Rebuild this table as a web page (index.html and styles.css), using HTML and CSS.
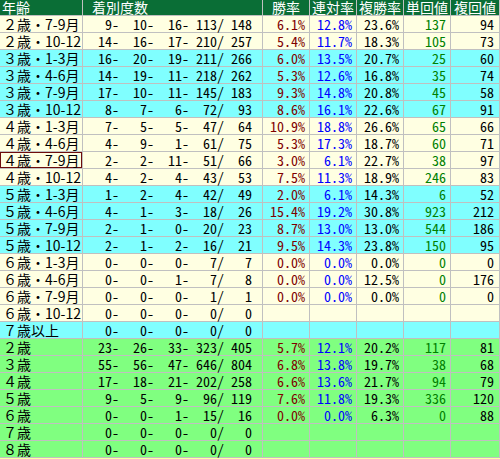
FILE: index.html
```html
<!DOCTYPE html>
<html lang="ja">
<head>
<meta charset="utf-8">
<link rel="stylesheet" href="styles.css">
</head>
<body>
<table class="stats">
<thead>
<tr><th class="h-age">年齢</th><th class="h-rec">着別度数</th><th class="h-n">勝率</th><th class="h-n">連対率</th><th class="h-n">複勝率</th><th class="h-n">単回値</th><th class="h-last">複回値</th></tr>
</thead>
<tbody>
<tr class="y"><td class="age">２歳・7-9月</td><td class="rec"><span>9-</span><span>10-</span><span>16-</span><span>113/</span><span>148</span></td><td class="win">6.1%</td><td class="ren">12.8%</td><td class="fuk">23.6%</td><td class="tan">137</td><td class="fkv">94</td></tr>
<tr class="y"><td class="age">２歳・10-12</td><td class="rec"><span>14-</span><span>16-</span><span>17-</span><span>210/</span><span>257</span></td><td class="win">5.4%</td><td class="ren">11.7%</td><td class="fuk">18.3%</td><td class="tan">105</td><td class="fkv">73</td></tr>
<tr class="c"><td class="age">３歳・1-3月</td><td class="rec"><span>16-</span><span>20-</span><span>19-</span><span>211/</span><span>266</span></td><td class="win">6.0%</td><td class="ren">13.5%</td><td class="fuk">20.7%</td><td class="tan">25</td><td class="fkv">60</td></tr>
<tr class="c"><td class="age">３歳・4-6月</td><td class="rec"><span>14-</span><span>19-</span><span>11-</span><span>218/</span><span>262</span></td><td class="win">5.3%</td><td class="ren">12.6%</td><td class="fuk">16.8%</td><td class="tan">35</td><td class="fkv">74</td></tr>
<tr class="c"><td class="age">３歳・7-9月</td><td class="rec"><span>17-</span><span>10-</span><span>11-</span><span>145/</span><span>183</span></td><td class="win">9.3%</td><td class="ren">14.8%</td><td class="fuk">20.8%</td><td class="tan">45</td><td class="fkv">58</td></tr>
<tr class="c"><td class="age">３歳・10-12</td><td class="rec"><span>8-</span><span>7-</span><span>6-</span><span>72/</span><span>93</span></td><td class="win">8.6%</td><td class="ren">16.1%</td><td class="fuk">22.6%</td><td class="tan">67</td><td class="fkv">91</td></tr>
<tr class="y"><td class="age">４歳・1-3月</td><td class="rec"><span>7-</span><span>5-</span><span>5-</span><span>47/</span><span>64</span></td><td class="win">10.9%</td><td class="ren">18.8%</td><td class="fuk">26.6%</td><td class="tan">65</td><td class="fkv">66</td></tr>
<tr class="y"><td class="age">４歳・4-6月</td><td class="rec"><span>4-</span><span>9-</span><span>1-</span><span>61/</span><span>75</span></td><td class="win">5.3%</td><td class="ren">17.3%</td><td class="fuk">18.7%</td><td class="tan">60</td><td class="fkv">71</td></tr>
<tr class="y"><td class="age sel">４歳・7-9月</td><td class="rec"><span>2-</span><span>2-</span><span>11-</span><span>51/</span><span>66</span></td><td class="win">3.0%</td><td class="ren">6.1%</td><td class="fuk">22.7%</td><td class="tan">38</td><td class="fkv">97</td></tr>
<tr class="y"><td class="age">４歳・10-12</td><td class="rec"><span>4-</span><span>2-</span><span>4-</span><span>43/</span><span>53</span></td><td class="win">7.5%</td><td class="ren">11.3%</td><td class="fuk">18.9%</td><td class="tan">246</td><td class="fkv">83</td></tr>
<tr class="c"><td class="age">５歳・1-3月</td><td class="rec"><span>1-</span><span>2-</span><span>4-</span><span>42/</span><span>49</span></td><td class="win">2.0%</td><td class="ren">6.1%</td><td class="fuk">14.3%</td><td class="tan">6</td><td class="fkv">52</td></tr>
<tr class="c"><td class="age">５歳・4-6月</td><td class="rec"><span>4-</span><span>1-</span><span>3-</span><span>18/</span><span>26</span></td><td class="win">15.4%</td><td class="ren">19.2%</td><td class="fuk">30.8%</td><td class="tan">923</td><td class="fkv">212</td></tr>
<tr class="c"><td class="age">５歳・7-9月</td><td class="rec"><span>2-</span><span>1-</span><span>0-</span><span>20/</span><span>23</span></td><td class="win">8.7%</td><td class="ren">13.0%</td><td class="fuk">13.0%</td><td class="tan">544</td><td class="fkv">186</td></tr>
<tr class="c"><td class="age">５歳・10-12</td><td class="rec"><span>2-</span><span>1-</span><span>2-</span><span>16/</span><span>21</span></td><td class="win">9.5%</td><td class="ren">14.3%</td><td class="fuk">23.8%</td><td class="tan">150</td><td class="fkv">95</td></tr>
<tr class="y"><td class="age">６歳・1-3月</td><td class="rec"><span>0-</span><span>0-</span><span>0-</span><span>7/</span><span>7</span></td><td class="win">0.0%</td><td class="ren">0.0%</td><td class="fuk">0.0%</td><td class="tan">0</td><td class="fkv">0</td></tr>
<tr class="y"><td class="age">６歳・4-6月</td><td class="rec"><span>0-</span><span>0-</span><span>1-</span><span>7/</span><span>8</span></td><td class="win">0.0%</td><td class="ren">0.0%</td><td class="fuk">12.5%</td><td class="tan">0</td><td class="fkv">176</td></tr>
<tr class="y"><td class="age">６歳・7-9月</td><td class="rec"><span>0-</span><span>0-</span><span>0-</span><span>1/</span><span>1</span></td><td class="win">0.0%</td><td class="ren">0.0%</td><td class="fuk">0.0%</td><td class="tan">0</td><td class="fkv">0</td></tr>
<tr class="y"><td class="age">６歳・10-12</td><td class="rec"><span>0-</span><span>0-</span><span>0-</span><span>0/</span><span>0</span></td><td class="win"></td><td class="ren"></td><td class="fuk"></td><td class="tan"></td><td class="fkv"></td></tr>
<tr class="c"><td class="age">７歳以上</td><td class="rec"><span>0-</span><span>0-</span><span>0-</span><span>0/</span><span>0</span></td><td class="win"></td><td class="ren"></td><td class="fuk"></td><td class="tan"></td><td class="fkv"></td></tr>
<tr class="g"><td class="age">２歳</td><td class="rec"><span>23-</span><span>26-</span><span>33-</span><span>323/</span><span>405</span></td><td class="win">5.7%</td><td class="ren">12.1%</td><td class="fuk">20.2%</td><td class="tan">117</td><td class="fkv">81</td></tr>
<tr class="g"><td class="age">３歳</td><td class="rec"><span>55-</span><span>56-</span><span>47-</span><span>646/</span><span>804</span></td><td class="win">6.8%</td><td class="ren">13.8%</td><td class="fuk">19.7%</td><td class="tan">38</td><td class="fkv">68</td></tr>
<tr class="g"><td class="age">４歳</td><td class="rec"><span>17-</span><span>18-</span><span>21-</span><span>202/</span><span>258</span></td><td class="win">6.6%</td><td class="ren">13.6%</td><td class="fuk">21.7%</td><td class="tan">94</td><td class="fkv">79</td></tr>
<tr class="g"><td class="age">５歳</td><td class="rec"><span>9-</span><span>5-</span><span>9-</span><span>96/</span><span>119</span></td><td class="win">7.6%</td><td class="ren">11.8%</td><td class="fuk">19.3%</td><td class="tan">336</td><td class="fkv">120</td></tr>
<tr class="g"><td class="age">６歳</td><td class="rec"><span>0-</span><span>0-</span><span>1-</span><span>15/</span><span>16</span></td><td class="win">0.0%</td><td class="ren">0.0%</td><td class="fuk">6.3%</td><td class="tan">0</td><td class="fkv">88</td></tr>
<tr class="g"><td class="age">７歳</td><td class="rec"><span>0-</span><span>0-</span><span>0-</span><span>0/</span><span>0</span></td><td class="win"></td><td class="ren"></td><td class="fuk"></td><td class="tan"></td><td class="fkv"></td></tr>
<tr class="g"><td class="age">８歳</td><td class="rec"><span>0-</span><span>0-</span><span>0-</span><span>0/</span><span>0</span></td><td class="win"></td><td class="ren"></td><td class="fuk"></td><td class="tan"></td><td class="fkv"></td></tr>
</tbody>
</table>
</body>
</html>
```

FILE: styles.css
```css
* { box-sizing: border-box; }
html, body {
  margin: 0;
  padding: 0;
  background: #ffffa8;
}
body {
  font-family: "Noto Sans CJK JP", "Noto Sans", sans-serif;
  font-size: 14px;
}
.stats {
  border-collapse: separate;
  border-spacing: 0;
  table-layout: fixed;
  width: 500px;
}
.stats th,
.stats td {
  padding: 0;
  border-right: 1px solid #c0c0c0;
  border-bottom: 1px solid #c0c0c0;
  white-space: nowrap;
  font-weight: normal;
}
.stats th {
  height: 16px;
  line-height: 15px;
  background: #0a6e36;
  color: #ffffff;
  text-align: center;
}
.h-age { width: 83px; text-align: left !important; padding-left: 2px !important; }
.h-rec { width: 180px; text-align: left !important; padding-left: 9px !important; }
.h-n { width: 47px; }
.h-last { width: 49px; }

.stats td {
  height: 17px;
  line-height: 16px;
  text-align: right;
  padding-right: 4px;
  font-feature-settings: "hwid" 1;
}
.y td { background: #ffffe2; }
.c td { background: #80ffff; }
.g td { background: #80ff80; }

.stats td.age {
  text-align: left;
  padding-left: 3px;
  padding-right: 0;
  font-feature-settings: normal;
}
.stats td.sel {
  box-shadow: inset 0 0 0 1px #6e0c0c;
}
.stats td.rec {
  text-align: left;
  padding: 0;
}
.rec span {
  display: inline-block;
  width: 35px;
  text-align: right;
}
.rec span:first-child { width: 36px; }
.rec span:last-child { width: 28px; }

.win { color: #800000; }
.ren { color: #0000ff; }
.fuk { color: #000000; }
.tan { color: #008000; }
.stats td.fkv { color: #000000; padding-right: 5px; }
```
